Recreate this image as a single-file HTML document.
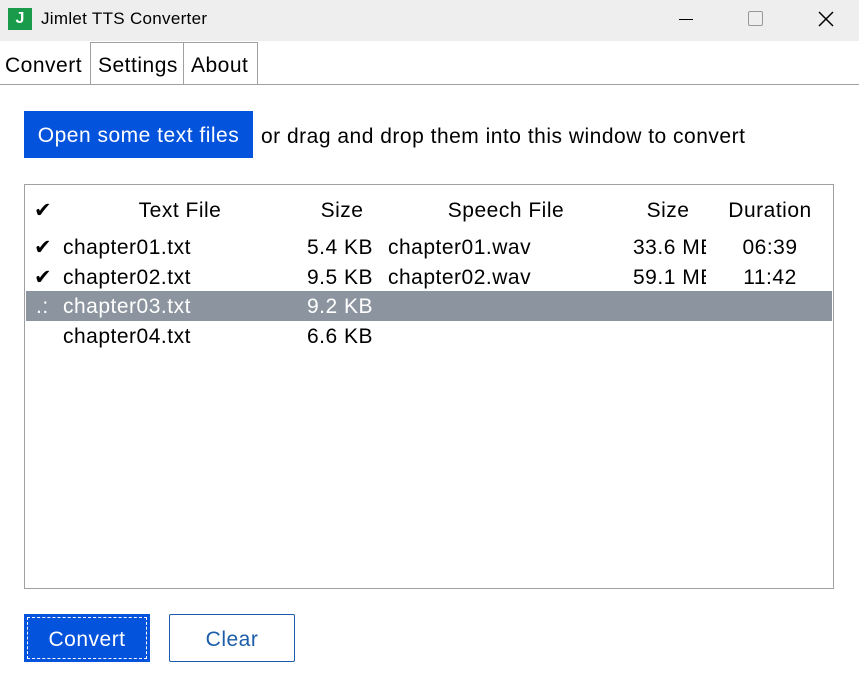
<!DOCTYPE html>
<html><head><meta charset="utf-8"><style>
*{margin:0;padding:0;box-sizing:border-box}
body{width:859px;height:686px;background:#fff;font-family:"Segoe UI","Liberation Sans",sans-serif;color:#000;position:relative;overflow:hidden}
.a{position:absolute;white-space:nowrap}
.t{font-size:21px;line-height:30px;letter-spacing:0.5px}
.r{text-align:right}
.c{text-align:center}
</style></head><body>
<div class="a" style="left:0;top:0;width:859px;height:41px;background:#eeeeee"></div>
<div class="a" style="left:8px;top:8px;width:24px;height:22px;background:#1a9b4b;color:#fff;font-weight:bold;font-size:16px;line-height:22px;text-align:center">J</div>
<div class="a" style="left:41px;top:8px;font-size:17px;line-height:22px;letter-spacing:0.3px">Jimlet TTS Converter</div>
<div class="a" style="left:679px;top:19px;width:14px;height:1px;background:#000"></div>
<div class="a" style="left:748px;top:11px;width:15px;height:15px;border:1px solid #999;border-radius:2px"></div>
<svg class="a" style="left:817px;top:10px" width="18" height="18"><path d="M2 2L16 16M16 2L2 16" stroke="#000" stroke-width="1.5"/></svg>
<div class="a" style="left:0;top:84px;width:859px;height:1px;background:#a0a0a0"></div>
<div class="a t" style="left:5px;top:51px">Convert</div>
<div class="a" style="left:90px;top:42px;width:94px;height:43px;border:1px solid #a0a0a0;border-bottom:none"></div>
<div class="a t" style="left:98px;top:51px">Settings</div>
<div class="a" style="left:183px;top:42px;width:75px;height:43px;border:1px solid #a0a0a0;border-bottom:none"></div>
<div class="a t" style="left:191px;top:51px">About</div>
<div class="a t c" style="left:24px;top:111px;width:229px;height:47px;background:#0353dc;color:#fff;line-height:50px">Open some text files</div>
<div class="a t" style="left:261px;top:122px">or drag and drop them into this window to convert</div>
<div class="a" style="left:24px;top:184px;width:810px;height:405px;border:1px solid #a0a0a0"></div>
<div class="a" style="left:26px;top:291px;width:806px;height:30px;background:#8c959f"></div>
<div class="a t" style="left:34px;top:196px">✔</div>
<div class="a t c" style="left:100px;top:196px;width:160px">Text File</div>
<div class="a t c" style="left:300px;top:196px;width:84px">Size</div>
<div class="a t c" style="left:420px;top:196px;width:172px">Speech File</div>
<div class="a t c" style="left:630px;top:196px;width:76px">Size</div>
<div class="a t c" style="left:720px;top:196px;width:100px">Duration</div>

<div class="a t" style="left:34px;top:233px">✔</div>
<div class="a t" style="left:63px;top:233px">chapter01.txt</div>
<div class="a t r" style="left:270px;top:233px;width:103px">5.4 KB</div>
<div class="a t" style="left:388px;top:233px">chapter01.wav</div>
<div class="a t" style="left:633px;top:233px;width:73px;overflow:hidden">33.6 MB</div>
<div class="a t c" style="left:720px;top:233px;width:100px">06:39</div>

<div class="a t" style="left:34px;top:263px">✔</div>
<div class="a t" style="left:63px;top:263px">chapter02.txt</div>
<div class="a t r" style="left:270px;top:263px;width:103px">9.5 KB</div>
<div class="a t" style="left:388px;top:263px">chapter02.wav</div>
<div class="a t" style="left:633px;top:263px;width:73px;overflow:hidden">59.1 MB</div>
<div class="a t c" style="left:720px;top:263px;width:100px">11:42</div>

<div class="a t" style="left:36px;top:292px;color:#fff">.:</div>
<div class="a t" style="left:63px;top:292px;color:#fff">chapter03.txt</div>
<div class="a t r" style="left:270px;top:292px;width:103px;color:#fff">9.2 KB</div>

<div class="a t" style="left:63px;top:322px">chapter04.txt</div>
<div class="a t r" style="left:270px;top:322px;width:103px">6.6 KB</div>

<div class="a t c" style="left:24px;top:614px;width:126px;height:48px;background:#0353dc;color:#fff;line-height:51px"><div class="a" style="left:3px;top:3px;right:3px;bottom:3px;border:1px dashed #fff"></div>Convert</div>
<div class="a t c" style="left:169px;top:614px;width:126px;height:48px;border:1px solid #1c5ca8;color:#1c5ca8;line-height:49px;border-radius:2px">Clear</div>
</body></html>
